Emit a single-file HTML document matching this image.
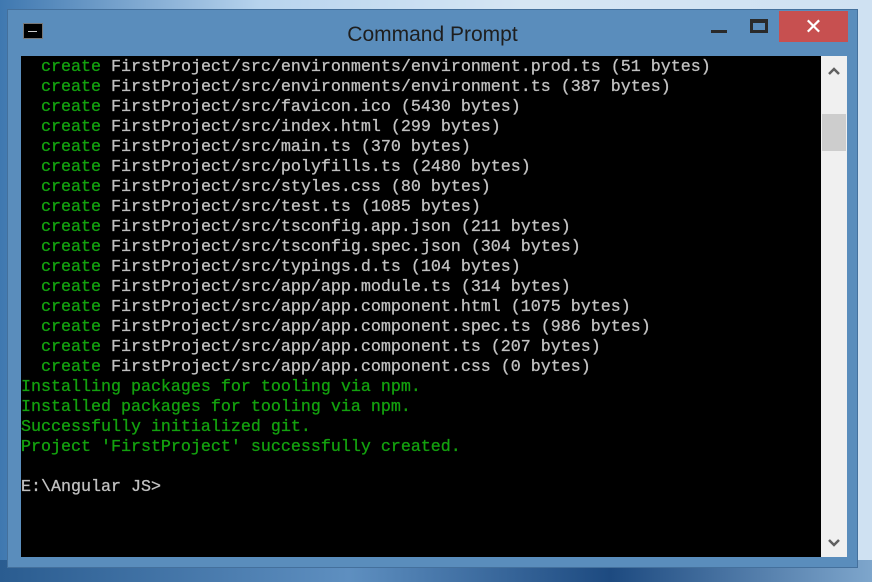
<!DOCTYPE html>
<html><head><style>
body{margin:0;width:872px;height:582px;overflow:hidden;background:linear-gradient(90deg,#3f78b0 0%,#b8d4ee 30%,#d6e6f4 60%,#cfe1f2 100%);position:relative;font-family:"Liberation Mono",monospace}
.bot{position:absolute;left:0;top:560px;width:872px;height:22px;background:linear-gradient(90deg,#2a5c90,#5e8fc0 40%,#1d4a80 70%,#7ea6cc)}
.win{position:absolute;left:7px;top:9px;width:851px;height:559px;background:#5a8dbc;border:1px solid #44709c;box-sizing:border-box}
.title{position:absolute;left:0;width:100%;top:13px;text-align:center;font-family:"Liberation Sans",sans-serif;font-size:21px;color:#1e1e1e}
.icon{position:absolute;left:15px;top:13px;width:20px;height:16px;background:#000;border:1px solid #777;box-sizing:border-box}
.close{position:absolute;left:771px;top:1px;width:69px;height:31px;background:#c75050;color:#fff;font-family:"Liberation Sans",sans-serif;font-size:22px;text-align:center;line-height:31px}
.con{position:absolute;left:13px;top:46px;width:800px;height:501px;background:#000;overflow:hidden}
.sb{position:absolute;left:813px;top:46px;width:26px;height:501px;background:#f0f0f0}
.thumb{position:absolute;left:1px;top:58px;width:24px;height:37px;background:#cdcdcd}
pre{margin:0;position:absolute;left:0;top:2px;font-size:16.67px;line-height:20px;color:#c0c0c0;font-family:"Liberation Mono",monospace;-webkit-text-stroke:0.3px}
.g{color:#13a10e}
</style></head><body>
<div class="bot"></div>
<div class="win">
<div class="icon"><div style="position:absolute;left:4px;top:7px;width:9px;height:1px;background:#ccc"></div></div>
<div class="title">Command Prompt</div>
<div style="position:absolute;left:703px;top:20px;width:16px;height:3px;background:#2a2a2a"></div>
<div style="position:absolute;left:742px;top:9px;width:18px;height:14px;border:3px solid #2a2a2a;border-top-width:4px;box-sizing:border-box"></div>
<div class="close">✕</div>
<div class="con"><pre>  <span class="g">create</span> FirstProject/src/environments/environment.prod.ts (51 bytes)
  <span class="g">create</span> FirstProject/src/environments/environment.ts (387 bytes)
  <span class="g">create</span> FirstProject/src/favicon.ico (5430 bytes)
  <span class="g">create</span> FirstProject/src/index.html (299 bytes)
  <span class="g">create</span> FirstProject/src/main.ts (370 bytes)
  <span class="g">create</span> FirstProject/src/polyfills.ts (2480 bytes)
  <span class="g">create</span> FirstProject/src/styles.css (80 bytes)
  <span class="g">create</span> FirstProject/src/test.ts (1085 bytes)
  <span class="g">create</span> FirstProject/src/tsconfig.app.json (211 bytes)
  <span class="g">create</span> FirstProject/src/tsconfig.spec.json (304 bytes)
  <span class="g">create</span> FirstProject/src/typings.d.ts (104 bytes)
  <span class="g">create</span> FirstProject/src/app/app.module.ts (314 bytes)
  <span class="g">create</span> FirstProject/src/app/app.component.html (1075 bytes)
  <span class="g">create</span> FirstProject/src/app/app.component.spec.ts (986 bytes)
  <span class="g">create</span> FirstProject/src/app/app.component.ts (207 bytes)
  <span class="g">create</span> FirstProject/src/app/app.component.css (0 bytes)
<span class="g">Installing packages for tooling via npm.
Installed packages for tooling via npm.
Successfully initialized git.
Project 'FirstProject' successfully created.</span>

E:\Angular JS&gt;</pre></div>
<div class="sb">
<svg style="position:absolute;left:6px;top:10px" width="14" height="10"><path d="M2 8 L7 3 L12 8" stroke="#606060" stroke-width="2.5" fill="none"/></svg>
<div class="thumb"></div>
<svg style="position:absolute;left:6px;top:482px" width="14" height="10"><path d="M2 2 L7 7 L12 2" stroke="#606060" stroke-width="2.5" fill="none"/></svg>
</div>
</div>
</body></html>
